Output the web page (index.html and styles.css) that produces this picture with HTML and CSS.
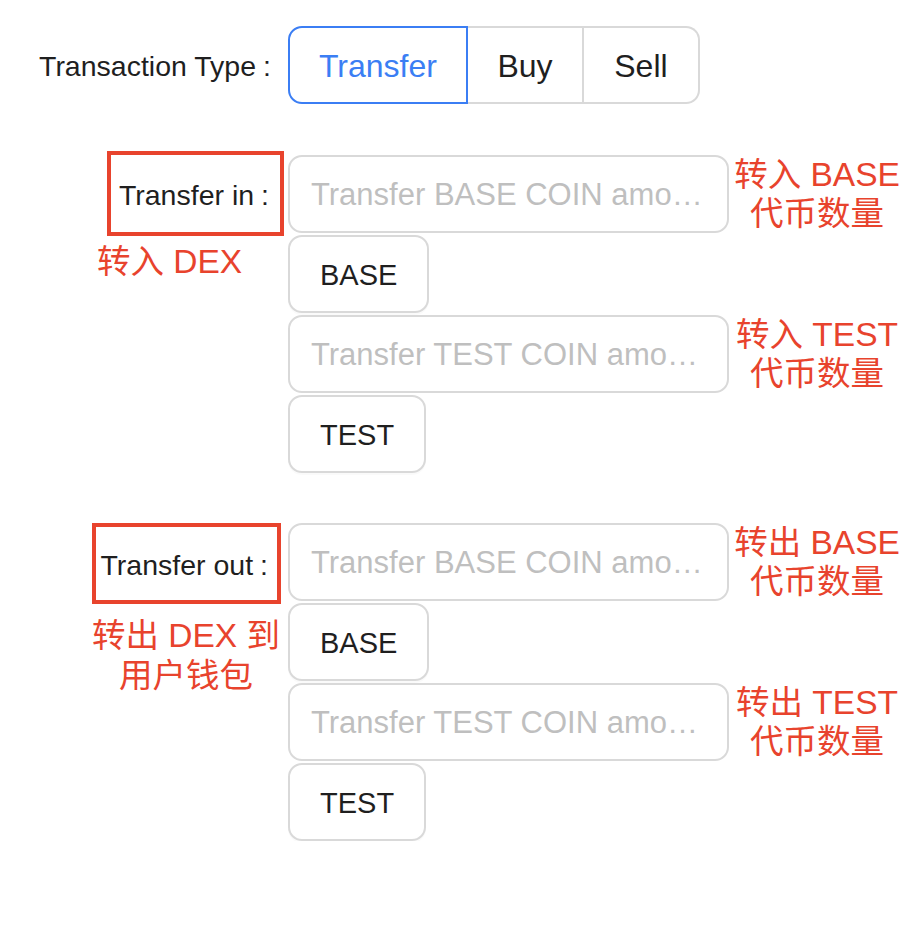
FILE: index.html
```html
<!DOCTYPE html>
<html lang="en">
<head>
<meta charset="utf-8">
<title>Transaction</title>
<link rel="stylesheet" href="styles.css">
</head>
<body>
<form class="form">
  <div class="row row-type">
    <div class="label-col">
      <label class="label label-plain">Transaction Type<span class="colon">:</span></label>
    </div>
    <div class="seg">
      <button type="button" class="seg-btn active">Transfer</button>
      <button type="button" class="seg-btn">Buy</button>
      <button type="button" class="seg-btn">Sell</button>
    </div>
  </div>

  <div class="row row-in">
    <div class="label-col">
      <label class="label mark mark-in">Transfer in<span class="colon">:</span></label>
      <div class="side-note side-note-in">转入 DEX</div>
    </div>
    <div class="control-col">
      <div class="field">
        <input class="input" type="text" placeholder="Transfer BASE COIN amount">
        <div class="note">转入 BASE<br>代币数量</div>
      </div>
      <button type="button" class="coin-btn">BASE</button>
      <div class="field">
        <input class="input" type="text" placeholder="Transfer TEST COIN amount">
        <div class="note">转入 TEST<br>代币数量</div>
      </div>
      <button type="button" class="coin-btn">TEST</button>
    </div>
  </div>

  <div class="row row-out">
    <div class="label-col">
      <label class="label mark mark-out">Transfer out<span class="colon">:</span></label>
      <div class="side-note side-note-out">转出 DEX 到<br>用户钱包</div>
    </div>
    <div class="control-col">
      <div class="field">
        <input class="input" type="text" placeholder="Transfer BASE COIN amount">
        <div class="note">转出 BASE<br>代币数量</div>
      </div>
      <button type="button" class="coin-btn">BASE</button>
      <div class="field">
        <input class="input" type="text" placeholder="Transfer TEST COIN amount">
        <div class="note">转出 TEST<br>代币数量</div>
      </div>
      <button type="button" class="coin-btn">TEST</button>
    </div>
  </div>
</form>
</body>
</html>
```

FILE: styles.css
```css
html, body {
  margin: 0;
  padding: 0;
  background: #ffffff;
}

body {
  font-family: "Liberation Sans", "Noto Sans CJK SC", sans-serif;
  color: #1f1f1f;
}

.form {
  padding-top: 26px;
}

.row {
  display: flex;
  align-items: flex-start;
}

.row-in {
  margin-top: 51px;
}

.row-out {
  margin-top: 50px;
}

.label-col {
  width: 288px;
  flex: none;
  display: flex;
  flex-direction: column;
}

.label {
  font-size: 28.5px;
  color: #1f1f1f;
  display: flex;
  align-items: center;
  justify-content: flex-end;
  white-space: nowrap;
  box-sizing: border-box;
  padding-top: 3px;
}

.colon {
  margin-left: 7px;
}

.label-plain {
  height: 78px;
  padding-right: 17px;
}

.mark {
  border: 4px solid #e8432d;
  align-self: flex-end;
}

.mark-in {
  width: 177px;
  height: 85px;
  margin-top: -4px;
  margin-right: 4px;
  padding-right: 11px;
}

.mark-out {
  width: 189px;
  height: 81px;
  margin-right: 7px;
  padding-right: 9px;
}

.side-note {
  font-family: "Liberation Sans", "Noto Sans CJK SC", sans-serif;
  font-size: 33.5px;
  line-height: 40px;
  color: #e8432d;
  white-space: nowrap;
}

.side-note-in {
  margin-top: 6px;
  margin-left: 97px;
}

.side-note-out {
  margin-top: 12px;
  margin-left: 88px;
  width: 196px;
  text-align: center;
}

/* segmented radio group */
.seg {
  display: flex;
}

.seg-btn {
  height: 78px;
  min-width: 116px;
  padding: 3px 29px 0;
  box-sizing: border-box;
  border: 2px solid #d9d9d9;
  border-left: none;
  background: #ffffff;
  font-family: "Liberation Sans", sans-serif;
  font-size: 32px;
  color: #1f1f1f;
  display: flex;
  align-items: center;
  justify-content: center;
  cursor: pointer;
}

.seg-btn:first-child {
  border-left: 2px solid #d9d9d9;
  border-radius: 14px 0 0 14px;
}

.seg-btn:last-child {
  border-radius: 0 14px 14px 0;
}

.seg-btn.active {
  border-color: #3b7ef4;
  color: #3b7ef4;
}

.seg-btn.active:first-child {
  border-left-color: #3b7ef4;
}

/* controls */
.control-col {
  display: flex;
  flex-direction: column;
  align-items: flex-start;
  gap: 2px;
}

.field {
  display: flex;
  align-items: flex-start;
}

.input {
  width: 441px;
  height: 78px;
  box-sizing: border-box;
  border: 2px solid #d9d9d9;
  border-radius: 14px;
  padding: 2px 21px 0;
  font-family: "Liberation Sans", sans-serif;
  font-size: 31px;
  color: #1f1f1f;
  background: #ffffff;
  outline: none;
  text-overflow: ellipsis;
}

.input::placeholder {
  color: #bfbfbf;
  text-overflow: ellipsis;
}

.note {
  width: 176px;
  height: 78px;
  margin-left: 0;
  font-size: 33.5px;
  line-height: 39px;
  color: #e8432d;
  text-align: center;
  white-space: nowrap;
}

.coin-btn {
  height: 78px;
  padding: 2px 30px 0;
  box-sizing: border-box;
  border: 2px solid #d9d9d9;
  border-radius: 14px;
  background: #ffffff;
  font-family: "Liberation Sans", sans-serif;
  font-size: 29px;
  color: #1f1f1f;
  box-shadow: 0 2px 0 rgba(0, 0, 0, 0.02);
  cursor: pointer;
}
```
